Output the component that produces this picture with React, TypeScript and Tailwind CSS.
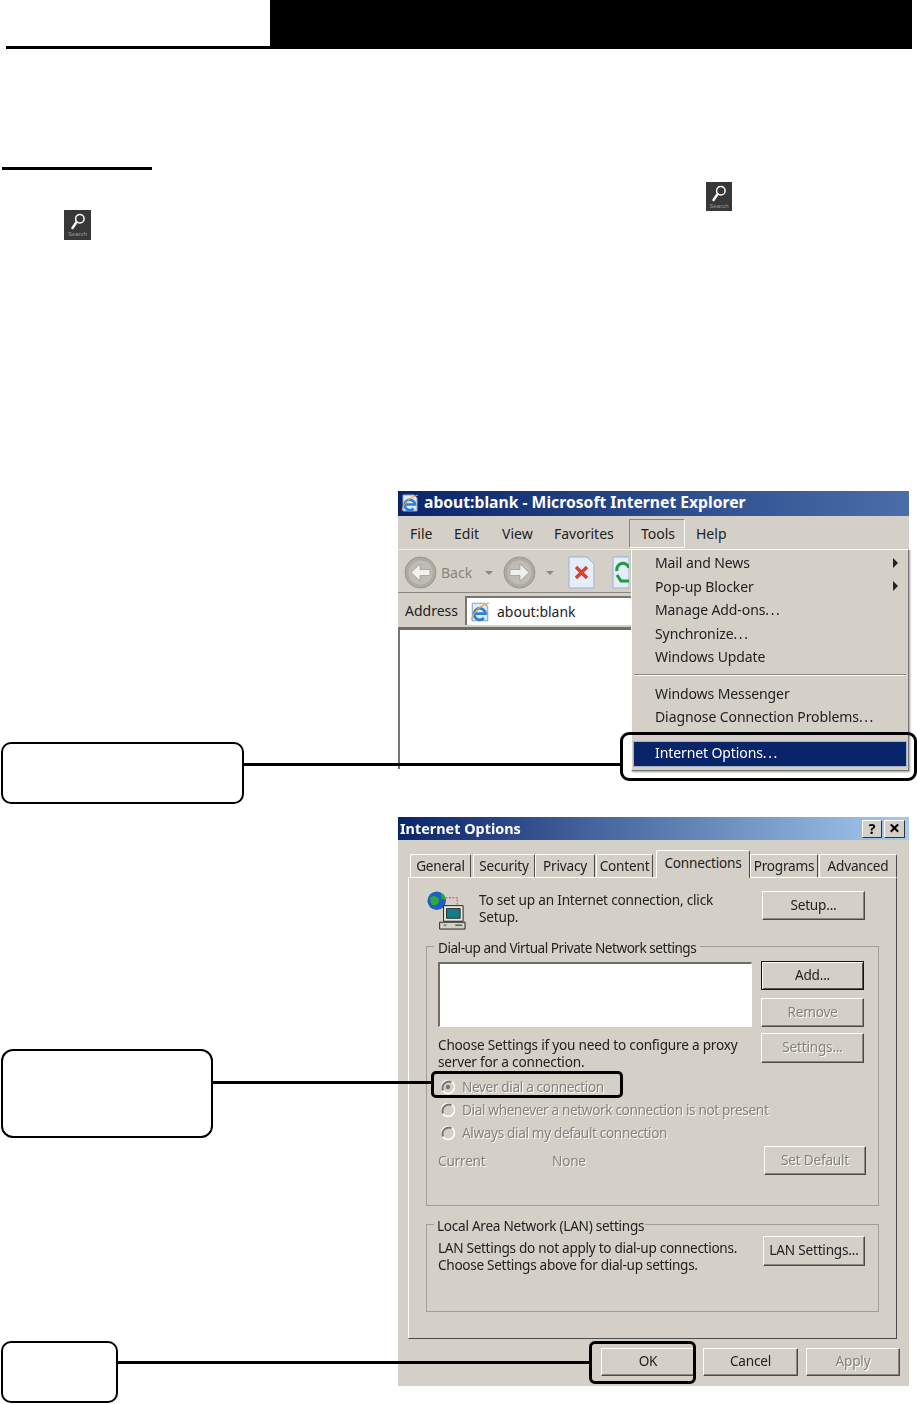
const tahoma = "font-['Noto_Sans','Open_Sans',sans-serif]";

function SearchTile({ className }: { className: string }) {
  return (
    <div className={`flex flex-col items-center bg-[#383838] ${className}`}>
      <svg viewBox="0 0 26 20" className="mt-[2px] h-[19px] w-[24px]" fill="none" stroke="#fff" strokeLinecap="round">
        <circle cx="15" cy="7" r="4.6" strokeWidth="1.6" />
        <path d="M11.5 10.5 7 17" strokeWidth="2.6" />
      </svg>
      <span className="font-['Liberation_Sans',sans-serif] text-[6px] leading-[7px] text-[#9a9a9a]">Search</span>
    </div>
  );
}

function WinButton({
  label,
  disabled,
  isDefault,
  className,
}: {
  label: string;
  disabled?: boolean;
  isDefault?: boolean;
  className: string;
}) {
  return (
    <div
      className={`flex shrink-0 items-center justify-center border bg-[#d4d0c8] pb-[3px] ${
        isDefault
          ? "border-[#111] shadow-[inset_1px_1px_0_#fff,inset_-1px_-1px_0_#555]"
          : "border-t-white border-l-white border-r-[#4a4a46] border-b-[#4a4a46] shadow-[inset_-1px_-1px_0_#8a8780]"
      } ${disabled ? "text-[#85827b] [text-shadow:1px_1px_0_#fff]" : "text-[#222]"} ${className}`}
    >
      {label}
    </div>
  );
}

function Radio({ label, checked }: { label: string; checked?: boolean }) {
  return (
    <div className="flex h-[23px] items-center pb-[2px] pl-[2px]">
      <svg viewBox="0 0 16 16" className="h-[16px] w-[16px]">
        <circle cx="8" cy="8" r="6.5" fill="#d4d0c8" stroke="#fff" strokeWidth="1.5" />
        <path d="M3 11.5A6.5 6.5 0 0 1 11.5 3" fill="none" stroke="#77756f" strokeWidth="2" />
        {checked && <circle cx="8" cy="8" r="2.2" fill="#77756f" />}
      </svg>
      <span className="ml-[6px] tracking-[-0.35px] text-[#85827b] [text-shadow:1px_1px_0_#fff]">{label}</span>
    </div>
  );
}

function Tab({ label, className, selected }: { label: string; className: string; selected?: boolean }) {
  return (
    <div
      className={`flex items-center justify-center rounded-t-[2px] border-t border-l border-r border-t-white border-l-white border-r-[#4a4a46] bg-[#d4d0c8] ${
        selected ? "z-10 -mb-[1px] h-[28px] pb-[5px]" : "h-[23px] pb-[2px]"
      } ${className}`}
    >
      {label}
    </div>
  );
}

function IeLogo({ className }: { className: string }) {
  return (
    <svg viewBox="0 0 20 20" className={className} fill="none">
      <path d="M3 2h11l3 3v13H3z" fill="#dfe9f8" stroke="#8ba4cc" />
      <path d="M5 11.5h10a5.2 5.2 0 1 0-1.4 4" stroke="#2f7fd6" strokeWidth="2.6" />
      <path d="M2 17C4 10 10 4 18 2" stroke="#e6a83a" strokeWidth="1.1" />
    </svg>
  );
}

function NavCircle({ forward }: { forward?: boolean }) {
  return (
    <svg viewBox="0 0 33 33" className="h-[33px] w-[33px] shrink-0">
      <circle cx="16.5" cy="16.5" r="15.5" fill="#aeaba4" stroke="#98958e" />
      <circle cx="16.5" cy="16.5" r="12" fill="#bfbcb5" />
      <path
        d={forward ? "M17 8l9 8.5-9 8.5v-5.5H7v-6h10z" : "M16 8l-9 8.5 9 8.5v-5.5h10v-6H16z"}
        fill="#f0f0ec"
        stroke="#8f8c85"
        strokeWidth="0.6"
      />
    </svg>
  );
}

function DropArrow() {
  return <span className="h-0 w-0 border-x-[4px] border-t-[4px] border-x-transparent border-t-[#8b8881]" />;
}

function MenuItem({ label, hasSub, dots }: { label: string; hasSub?: boolean; dots?: boolean }) {
  return (
    <div className="flex h-[23.5px] items-center pl-[23px] pr-[10px] tracking-[-0.1px]">
      <span>
        {label}
        {dots && <span className="tracking-[1.6px]">...</span>}
      </span>
      {hasSub && <span className="ml-auto h-0 w-0 border-y-[5px] border-l-[5px] border-y-transparent border-l-[#222]" />}
    </div>
  );
}

function BrowserWindow() {
  return (
    <div className={`relative ml-[398px] h-[278px] w-[511px] text-[14px] text-[#222] blur-[0.45px] ${tahoma}`}>
      <div className="flex h-[25px] items-center bg-[linear-gradient(90deg,#0a246a,#4a6ea9)] pb-[2px] pl-[2px] text-[15.7px] font-bold text-white">
        <IeLogo className="h-[20px] w-[20px]" />
        <span className="ml-[4px]">about:blank - Microsoft Internet Explorer</span>
      </div>
      <div className="flex h-[34px] items-center border-b border-[#efede8] bg-[#d4d0c8] pl-[12px] pt-[1px]">
        <span className="w-[44px]">File</span>
        <span className="w-[48px]">Edit</span>
        <span className="w-[52px]">View</span>
        <span className="w-[75px]">Favorites</span>
        <span className="flex h-[29px] w-[56px] items-center border border-t-[#8a8780] border-l-[#8a8780] border-r-white border-b-white pl-[11px]">
          Tools
        </span>
        <span className="ml-[11px]">Help</span>
      </div>
      <div className="flex h-[43px] items-center border-b border-[#8a8780] bg-[#d4d0c8] pl-[6px] pt-[3px]">
        <NavCircle />
        <span className="ml-[4px] w-[44px] text-[#8a8780]">Back</span>
        <DropArrow />
        <span className="w-[10px]" />
        <NavCircle forward />
        <span className="w-[10px]" />
        <DropArrow />
        <svg viewBox="0 0 27 33" className="ml-[14px] h-[33px] w-[27px] shrink-0">
          <path d="M1 1h18l7 7v24H1z" fill="#e4edf9" stroke="#9db0cf" />
          <path d="M8 11l11 11M19 11 8 22" stroke="#e0402a" strokeWidth="3.4" />
        </svg>
        <svg viewBox="0 0 17 33" className="ml-[17px] h-[33px] w-[17px] shrink-0">
          <path d="M1 1h16v31H1z" fill="#e4edf9" stroke="#9db0cf" />
          <path d="M5 15a6 6 0 0 1 12-3M5 19l4 6h8" fill="none" stroke="#1f9a3c" strokeWidth="3" />
        </svg>
      </div>
      <div className="flex h-[34px] items-center bg-[#d4d0c8] pl-[7px] pt-[1px]">
        <span className="w-[60px]">Address</span>
        <div className="flex h-[29px] flex-1 items-center border-t-2 border-l-2 border-t-[#77756f] border-l-[#77756f] bg-white pl-[2px]">
          <IeLogo className="h-[22px] w-[22px]" />
          <span className="ml-[6px]">about:blank</span>
        </div>
      </div>
      <div className="h-[142px] border-t-[3px] border-l-2 border-t-[#6f6d68] border-l-[#77756f] bg-white" />

      <div className="absolute left-[233px] top-[58px] h-[222px] w-[278px] border border-t-white border-l-white border-r-[#77756f] border-b-[#77756f] bg-[#d4d0c8] pt-[1px] shadow-[1px_1px_2px_#999]">
        <MenuItem label="Mail and News" hasSub />
        <MenuItem label="Pop-up Blocker" hasSub />
        <MenuItem label="Manage Add-ons" dots />
        <MenuItem label="Synchronize" dots />
        <MenuItem label="Windows Update" />
        <div className="mx-[2px] mb-[5px] mt-[5px] h-[2px] border-t border-b border-t-[#8a8780] border-b-white" />
        <div className="mt-[6px]">
          <MenuItem label="Windows Messenger" />
          <MenuItem label="Diagnose Connection Problems" dots />
        </div>
        <div className="mx-[1px] mt-[12px] flex h-[26px] items-center border border-[#a8b0c4] bg-[#0a246a] pb-[2px] pl-[21px] tracking-[-0.1px] text-white">
          <span>
            Internet Options<span className="tracking-[1.6px]">...</span>
          </span>
        </div>
      </div>
    </div>
  );
}

function ConnectionIcon() {
  return (
    <svg viewBox="0 0 42 42" className="h-[41px] w-[41px] shrink-0">
      <circle cx="11" cy="11" r="9.5" fill="#1f5fc4" />
      <path d="M4 8c4-3 6-2 8 0s2 5-1 7-5 0-6-2zM15 3c3 1 5 3 5 7l-4-1z" fill="#2fa83a" />
      <path d="M20 8h12v7" fill="none" stroke="#d84030" strokeWidth="1" strokeDasharray="2 1.5" />
      <path d="M18 16h20v16H18z" fill="#e8e6df" stroke="#222" />
      <path d="M21 19h14v10H21z" fill="#127c88" stroke="#333" />
      <path d="M14 33h26v7H14z" fill="#d4d0c8" stroke="#222" />
      <path d="M30 36h7" stroke="#222" />
      <path d="M18 36h3" stroke="#2fa83a" strokeWidth="1.5" />
    </svg>
  );
}

function OptionsDialog() {
  return (
    <div className={`ml-[398px] mt-[48px] h-[569px] w-[511px] bg-[#d4d0c8] text-[13.6px] leading-[17px] tracking-[-0.2px] text-[#222] blur-[0.45px] ${tahoma}`}>
      <div className="flex h-[23px] items-center bg-[linear-gradient(90deg,#0a246a,#a6caf0)] pl-[2px] pr-[4px] text-[14.4px] font-bold tracking-normal text-white">
        <span>Internet Options</span>
        <div className="ml-auto flex h-[18px] w-[20px] items-center justify-center border border-t-white border-l-white border-r-[#333] border-b-[#333] bg-[#d4d0c8] text-[14px] font-bold text-black">
          ?
        </div>
        <div className="ml-[2px] flex h-[18px] w-[21px] items-center justify-center border border-t-white border-l-white border-r-[#333] border-b-[#333] bg-[#d4d0c8] pb-[2px] text-[20px] font-bold text-black">
          ×
        </div>
      </div>

      <div className="mt-[10px] flex h-[27px] items-end pl-[12px]">
        <Tab label="General" className="w-[61px]" />
        <Tab label="Security" className="ml-[2px] w-[62px]" />
        <Tab label="Privacy" className="w-[60px]" />
        <Tab label="Content" className="ml-[1px] w-[57px]" />
        <Tab label="Connections" selected className="ml-[3px] w-[94px]" />
        <Tab label="Programs" className="w-[68px]" />
        <Tab label="Advanced" className="ml-[1px] w-[78px]" />
      </div>

      <div className="ml-[10px] h-[462px] w-[489px] border border-t-white border-l-white border-r-[#4a4a46] border-b-[#4a4a46] pl-[17px] pr-[18px]">
        <div className="mt-[12px] flex h-[41px]">
          <ConnectionIcon />
          <p className="ml-[12px] w-[270px] pt-[1px]">
            To set up an Internet connection, click
            <br />
            Setup.
          </p>
          <WinButton label="Setup..." className="ml-[13px] mt-[1px] h-[29px] w-[103px]" />
        </div>

        <div className="relative mt-[15px] h-[260px] w-[453px] border border-[#a19e97] pl-[11px] pr-[13px] pt-[14px]">
          <span className="absolute left-[7px] top-[-8px] bg-[#d4d0c8] px-[4px] tracking-[-0.48px]">
            Dial-up and Virtual Private Network settings
          </span>
          <div className="flex h-[66px]">
            <div className="mt-[1px] h-[65px] w-[314px] border-t-2 border-l-2 border-r border-b border-t-[#6f6d68] border-l-[#6f6d68] border-r-white border-b-white bg-white" />
            <div className="ml-[9px] flex flex-col gap-[8px]">
              <WinButton label="Add..." isDefault className="h-[29px] w-[103px]" />
              <WinButton label="Remove" disabled className="h-[29px] w-[103px]" />
            </div>
          </div>
          <div className="mt-[6px] flex h-[38px]">
            <p className="w-[323px] pt-[3px]">
              Choose Settings if you need to configure a proxy
              <br />
              server for a connection.
            </p>
            <WinButton label="Settings..." disabled className="h-[30px] w-[103px]" />
          </div>
          <div className="mt-[5px]">
            <Radio label="Never dial a connection" checked />
            <Radio label="Dial whenever a network connection is not present" />
            <Radio label="Always dial my default connection" />
          </div>
          <div className="mt-[1px] flex h-[29px] items-center text-[#85827b] [text-shadow:1px_1px_0_#fff]">
            <span className="w-[114px]">Current</span>
            <span>None</span>
            <WinButton label="Set Default" disabled className="-mr-[1px] ml-auto h-[29px] w-[102px]" />
          </div>
        </div>

        <div className="relative mt-[18px] flex h-[88px] w-[453px] border border-[#a19e97] pl-[11px] pr-[13px] pt-[11px]">
          <span className="absolute left-[7px] top-[-8px] bg-[#d4d0c8] pl-[3px] pr-[1px] tracking-[-0.27px]">
            Local Area Network (LAN) settings
          </span>
          <p className="pt-[3px] tracking-[-0.3px]">
            LAN Settings do not apply to dial-up connections.
            <br />
            Choose Settings above for dial-up settings.
          </p>
          <WinButton label="LAN Settings..." className="ml-auto h-[30px] w-[102px]" />
        </div>
      </div>

      <div className="mt-[9px] flex justify-end gap-[8px] pr-[9px]">
        <WinButton label="OK" className="h-[28px] w-[94px]" />
        <WinButton label="Cancel" className="h-[28px] w-[95px]" />
        <WinButton label="Apply" disabled className="h-[28px] w-[94px]" />
      </div>
    </div>
  );
}

export default function App() {
  return (
    <div className="relative h-[1404px] w-[917px] overflow-hidden bg-white">
      <div className="mr-[5px] flex h-[49px]">
        <div className="ml-[6px] flex w-[264px] flex-col justify-end">
          <div className="h-[3px] bg-black" />
        </div>
        <div className="flex-1 bg-black" />
      </div>

      <div className="ml-[2px] mt-[118px] h-[3px] w-[150px] bg-black" />
      <div className="mt-[12px] h-[28px]">
        <SearchTile className="ml-[706px] h-[29px] w-[26px]" />
      </div>
      <SearchTile className="ml-[64px] h-[30px] w-[27px]" />

      <div className="mt-[251px]">
        <BrowserWindow />
        <OptionsDialog />
      </div>

      {/* callouts sit on top of the screenshots */}
      <div className="absolute left-[1px] top-[742px] h-[62px] w-[243px] rounded-[10px] border-2 border-black bg-white" />
      <div className="absolute left-[244px] top-[763px] h-[3px] w-[377px] bg-black" />
      <div className="absolute left-[620px] top-[732px] h-[49px] w-[297px] rounded-[9px] border-[3px] border-black" />

      <div className="absolute left-[1px] top-[1049px] h-[89px] w-[212px] rounded-[12px] border-2 border-black bg-white" />
      <div className="absolute left-[213px] top-[1081px] h-[3px] w-[218px] bg-black" />
      <div className="absolute left-[431px] top-[1071px] h-[27px] w-[192px] rounded-[5px] border-[3px] border-black" />

      <div className="absolute left-[1px] top-[1341px] h-[62px] w-[117px] rounded-[10px] border-2 border-black bg-white" />
      <div className="absolute left-[118px] top-[1361px] h-[3px] w-[471px] bg-black" />
      <div className="absolute left-[589px] top-[1341px] h-[43px] w-[107px] rounded-[6px] border-[3px] border-black" />
    </div>
  );
}
